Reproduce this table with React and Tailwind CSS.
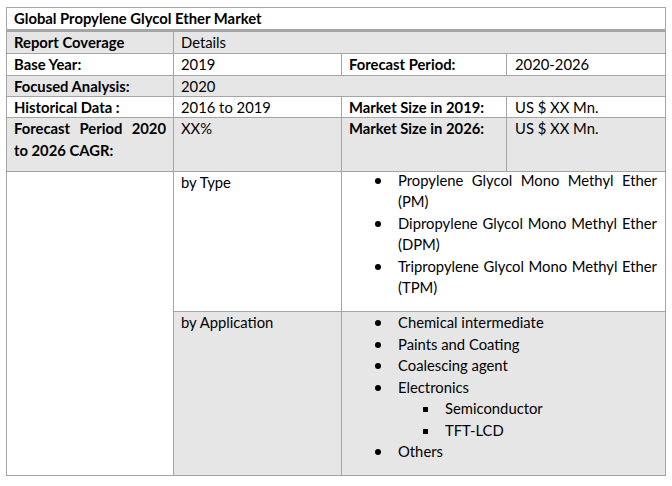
const font = { fontFamily: "Lato, 'Open Sans', sans-serif" };

function Dot() {
  return <span className="mt-[8px] h-[6px] w-[6px] shrink-0 rounded-full bg-black" />;
}

function Square() {
  return <span className="mt-[9px] h-[5px] w-[5px] shrink-0 bg-black" />;
}

function Item({ first, second }) {
  return (
    <div className="flex">
      <div className="flex w-[56px] shrink-0 pl-[33px]">
        <Dot />
      </div>
      <div className="flex-1">
        <div className={second ? "text-justify [text-align-last:justify]" : ""}>{first}</div>
        {second && <div>{second}</div>}
      </div>
    </div>
  );
}

function SubItem({ text }) {
  return (
    <div className="flex">
      <div className="flex w-[103px] shrink-0 pl-[81px]">
        <Square />
      </div>
      <div>{text}</div>
    </div>
  );
}

export default function App() {
  const gray = "bg-[#e7e6e6]";
  const cell = "px-[7px] leading-[21.5px]";

  return (
    <div className="h-[486px] w-[672px] bg-white pl-[6px] pt-[7px] text-[14.8px] text-black" style={font}>
      <div className="w-[660px] border border-[#a5a5a5]">
        <div className="h-[24px] border-b-[3px] border-[#a5a5a5] px-[7px] font-bold leading-[21px]">
          Global Propylene Glycol Ether Market
        </div>
        <div className="grid grid-cols-[166px_167px_164px_158px] grid-rows-[21px_21px_20px_20px_53px_139px_163px] gap-px bg-[#a5a5a5]">
          <div className={`${cell} ${gray} font-bold`}>Report Coverage</div>
          <div className={`${cell} ${gray} col-span-3`}>Details</div>

          <div className={`${cell} bg-white font-bold`}>Base Year:</div>
          <div className={`${cell} bg-white`}>2019</div>
          <div className={`${cell} bg-white font-bold`}>Forecast Period:</div>
          <div className={`${cell} bg-white pl-[8px]`}>2020-2026</div>

          <div className={`${cell} ${gray} font-bold`}>Focused Analysis:</div>
          <div className={`${cell} ${gray} col-span-3`}>2020</div>

          <div className={`${cell} bg-white font-bold`}>Historical Data :</div>
          <div className={`${cell} bg-white`}>2016 to 2019</div>
          <div className={`${cell} bg-white font-bold`}>Market Size in 2019:</div>
          <div className={`${cell} bg-white pl-[8px]`}>US $ XX Mn.</div>

          <div className={`${cell} ${gray} font-bold`}>
            <div className="text-justify [text-align-last:justify]">Forecast Period 2020</div>
            <div>to 2026 CAGR:</div>
          </div>
          <div className={`${cell} ${gray}`}>XX%</div>
          <div className={`${cell} ${gray} font-bold`}>Market Size in 2026:</div>
          <div className={`${cell} ${gray} pl-[8px]`}>US $ XX Mn.</div>

          <div className="row-span-2 bg-white" />
          <div className={`${cell} bg-white`}>by Type</div>
          <div className="col-span-2 bg-white pr-[8px] leading-[21.4px]">
            <div className="-mt-[2px]">
              <Item first="Propylene Glycol Mono Methyl Ether" second="(PM)" />
              <Item first="Dipropylene Glycol Mono Methyl Ether" second="(DPM)" />
              <Item first="Tripropylene Glycol Mono Methyl Ether" second="(TPM)" />
            </div>
          </div>

          <div className={`${cell} ${gray}`}>by Application</div>
          <div className={`col-span-2 ${gray} pr-[8px] leading-[21.5px]`}>
            <Item first="Chemical intermediate" />
            <Item first="Paints and Coating" />
            <Item first="Coalescing agent" />
            <Item first="Electronics" />
            <SubItem text="Semiconductor" />
            <SubItem text="TFT-LCD" />
            <Item first="Others" />
          </div>
        </div>
      </div>
    </div>
  );
}
